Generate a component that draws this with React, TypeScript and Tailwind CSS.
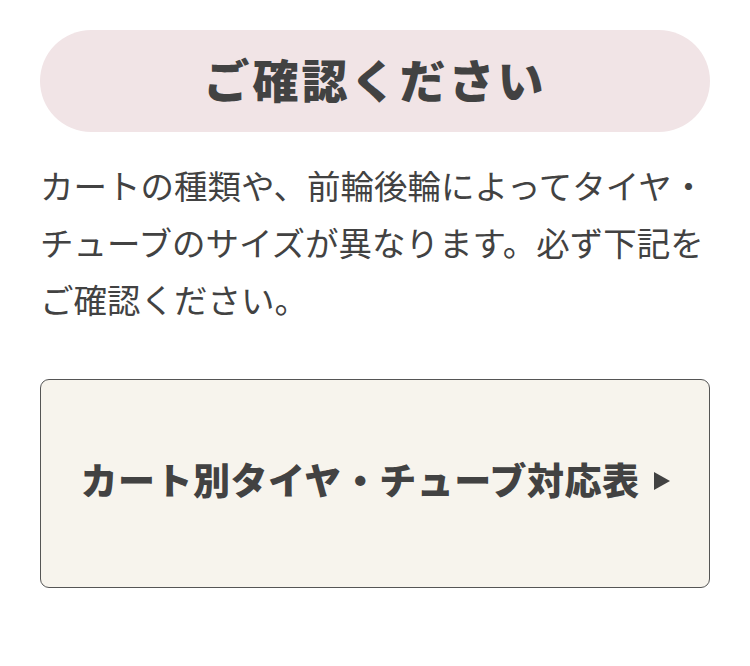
const App = () => {
  return (
    <div className="min-h-[666px] bg-white px-10 pt-[30px] text-[#424242] [font-family:'Noto_Sans_CJK_JP','Noto_Sans',sans-serif]">
      <h2 className="flex h-[102px] items-center justify-center rounded-full bg-[#f1e4e6] pb-[6px] text-[46px] font-black tracking-[3px]">
        ご確認ください
      </h2>
      <p className="mt-[24px] text-[33.5px] leading-[57px]">
        カートの種類や、前輪後輪によってタイヤ・チューブのサイズが異なります。必ず下記をご確認ください。
      </p>
      <a
        href="#"
        className="mt-[52px] flex h-[209px] items-center justify-center gap-[14px] rounded-[9px] border border-[#555] bg-[#f7f4ed] pb-[8px]"
      >
        <span className="text-[37px] font-black tracking-[0.5px]">カート別タイヤ・チューブ対応表</span>
        <svg width="16" height="18" viewBox="0 0 16 18" className="mt-[2px]">
          <path d="M0 0 L16 9 L0 18 Z" fill="#424242" />
        </svg>
      </a>
    </div>
  );
};

export default App;
